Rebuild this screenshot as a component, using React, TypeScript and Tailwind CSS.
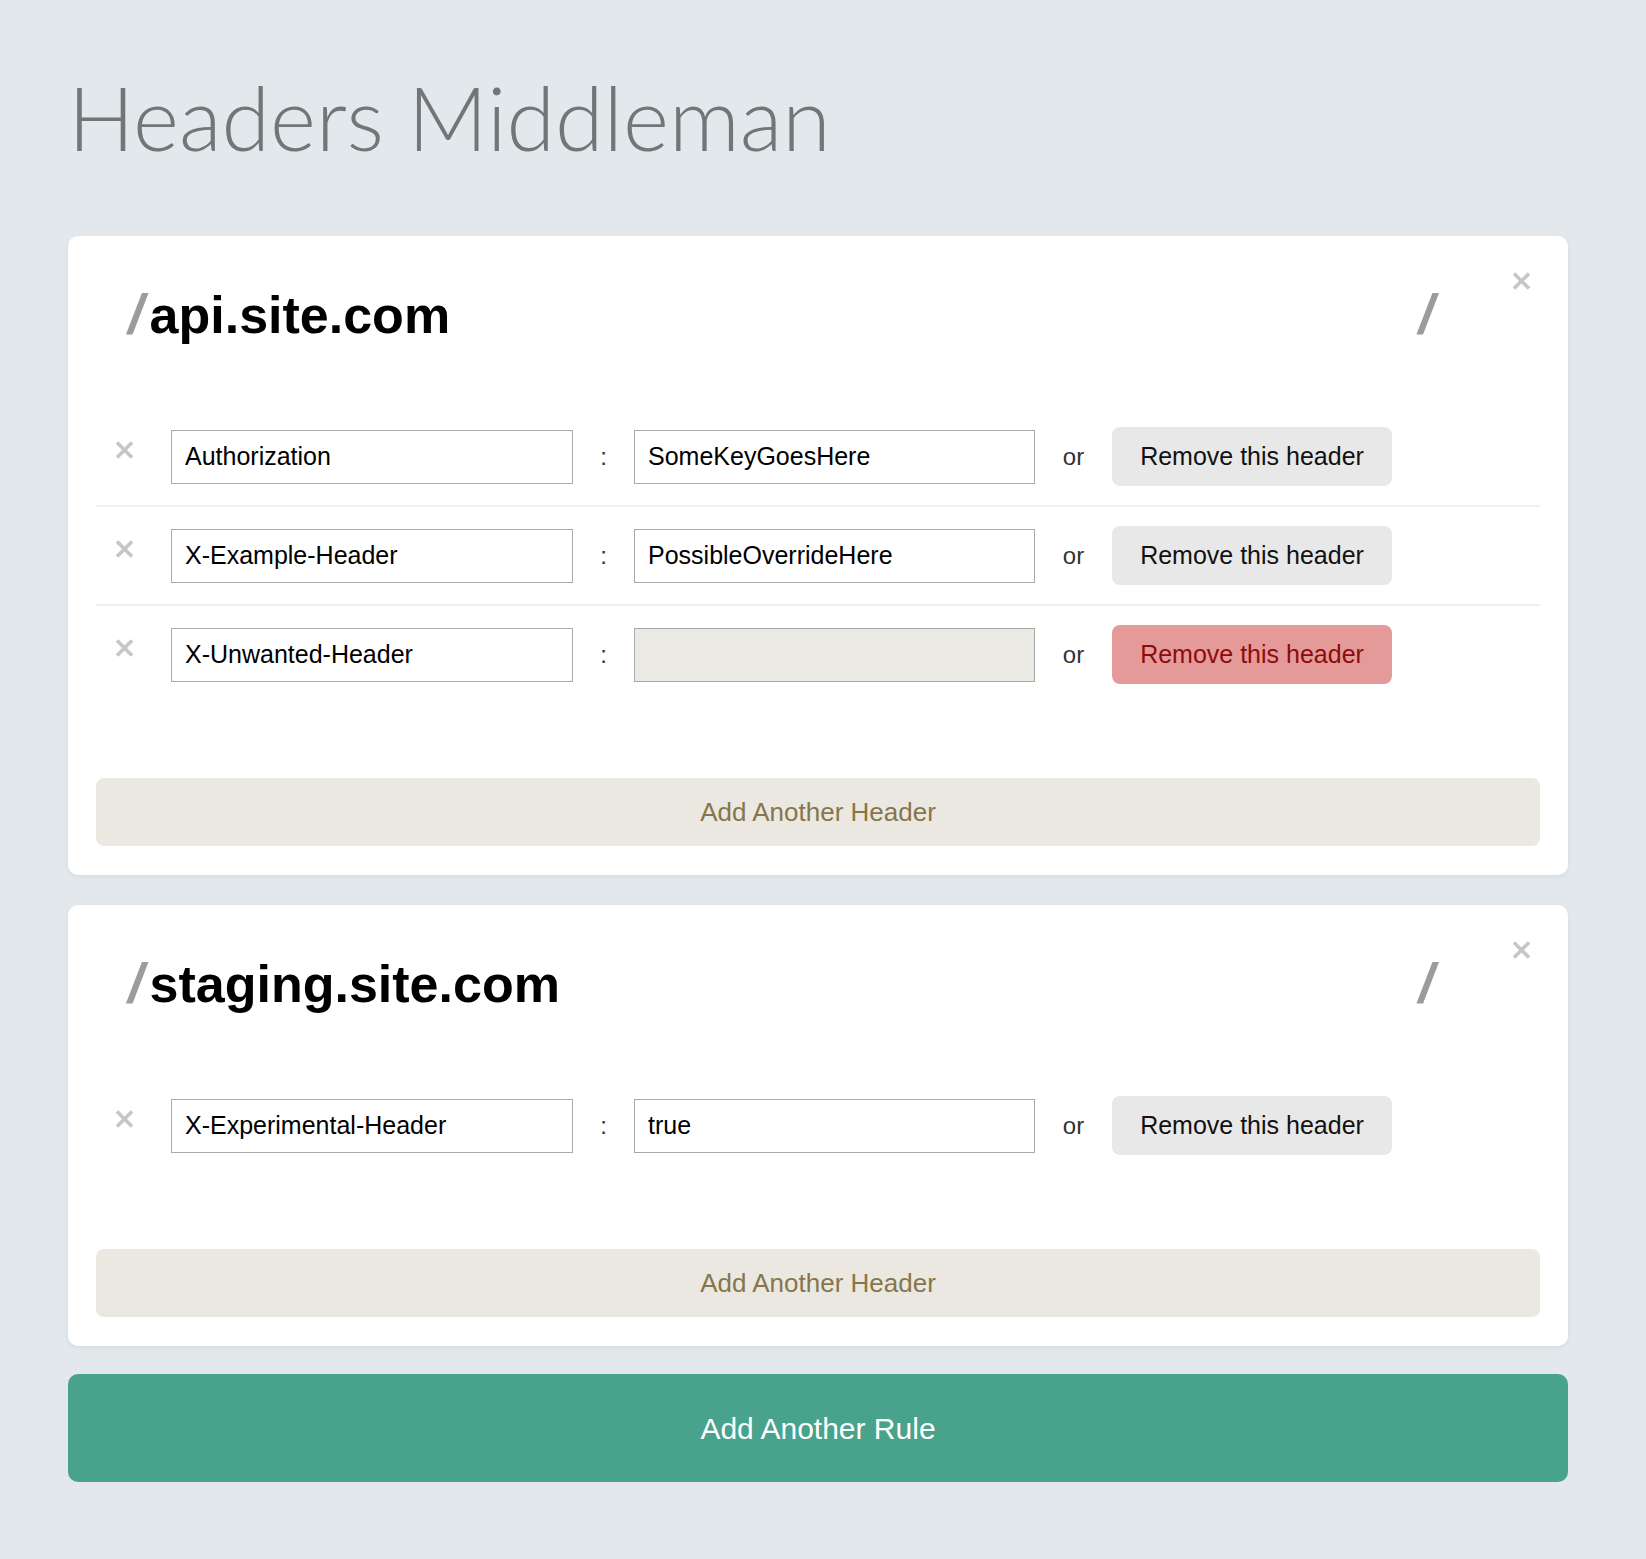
import React from 'react'

type Header = { name: string; value: string; removed?: boolean }
type Rule = { domain: string; headers: Header[] }

const rules: Rule[] = [
  {
    domain: 'api.site.com',
    headers: [
      { name: 'Authorization', value: 'SomeKeyGoesHere' },
      { name: 'X-Example-Header', value: 'PossibleOverrideHere' },
      { name: 'X-Unwanted-Header', value: '', removed: true },
    ],
  },
  {
    domain: 'staging.site.com',
    headers: [{ name: 'X-Experimental-Header', value: 'true' }],
  },
]

const Cross: React.FC<{ className?: string }> = ({ className }) => (
  <svg width="19" height="18" viewBox="0 0 19 18" className={className}>
    <path d="M2 1.5 L17 16.5 M17 1.5 L2 16.5" stroke="#c6c6c6" strokeWidth="3.6" fill="none" />
  </svg>
)

const HeaderRow: React.FC<{ header: Header; last: boolean }> = ({ header, last }) => (
  <div
    className={
      'flex items-center ' + (last ? 'h-[97px]' : 'h-[99px] border-b-2 border-[#efefef]')
    }
  >
    <div className="w-[75px] flex items-center">
      <Cross className="ml-[19px] mb-[13px]" />
    </div>
    <input
      readOnly
      value={header.name}
      className="w-[402px] h-[54px] border border-[#a9a9a9] bg-white px-[13px] text-[25px] text-black outline-none"
    />
    <span className="w-[61px] text-center text-[24px] text-[#333]">:</span>
    <input
      readOnly
      value={header.value}
      disabled={header.removed}
      className={
        'w-[401px] h-[54px] border border-[#a9a9a9] px-[13px] text-[25px] text-black outline-none ' +
        (header.removed ? 'bg-[#eae9e3]' : 'bg-white')
      }
    />
    <span className="w-[77px] text-center text-[24px] text-[#333]">or</span>
    <button
      className={
        'w-[280px] h-[59px] rounded-[8px] text-[25px] ' +
        (header.removed ? 'bg-[#e39a99] text-[#8e0b0b]' : 'bg-[#e8e8e8] text-[#111]')
      }
    >
      Remove this header
    </button>
  </div>
)

const RuleCard: React.FC<{ rule: Rule }> = ({ rule }) => (
  <div className="relative rounded-[10px] bg-white px-[28px] pt-[28px] pb-[29px] shadow-[0_2px_5px_rgba(0,0,0,0.06)]">
    <button className="absolute top-[36px] right-[37px]">
      <Cross />
    </button>
    <div className="h-[144px] flex items-start pt-[22px]">
      <div className="flex-1 flex items-baseline leading-none">
        <span className="ml-[32px] mr-[6px] text-[56px] font-bold italic text-[#9c9c9c]">/</span>
        <span className="text-[52px] font-bold text-black">{rule.domain}</span>
      </div>
      <span className="mr-[106px] text-[56px] leading-none font-bold italic text-[#9c9c9c]">/</span>
    </div>
    <div>
      {rule.headers.map((h, i) => (
        <HeaderRow key={h.name} header={h} last={i === rule.headers.length - 1} />
      ))}
    </div>
    <button className="mt-[75px] w-full h-[68px] rounded-[8px] bg-[#ebe8e1] text-[26px] text-[#86764a]">
      Add Another Header
    </button>
  </div>
)

export default function App() {
  return (
    <div className="min-h-screen bg-[#e2e8eb] font-['Liberation_Sans',Arial,sans-serif]">
      <div className="w-[1500px] ml-[68px] pb-[78px]">
        <h1 className="pt-[73px] h-[162px] text-[88px] leading-none font-light text-[#727677] font-['Lato','Open_Sans',sans-serif]">
          Headers Middleman
        </h1>
        <div className="mt-[74px] flex flex-col gap-[30px]">
          {rules.map((r) => (
            <RuleCard key={r.domain} rule={r} />
          ))}
        </div>
        <button className="mt-[28px] w-full h-[108px] rounded-[10px] bg-[#48a28c] text-[30px] text-white">
          Add Another Rule
        </button>
      </div>
    </div>
  )
}
